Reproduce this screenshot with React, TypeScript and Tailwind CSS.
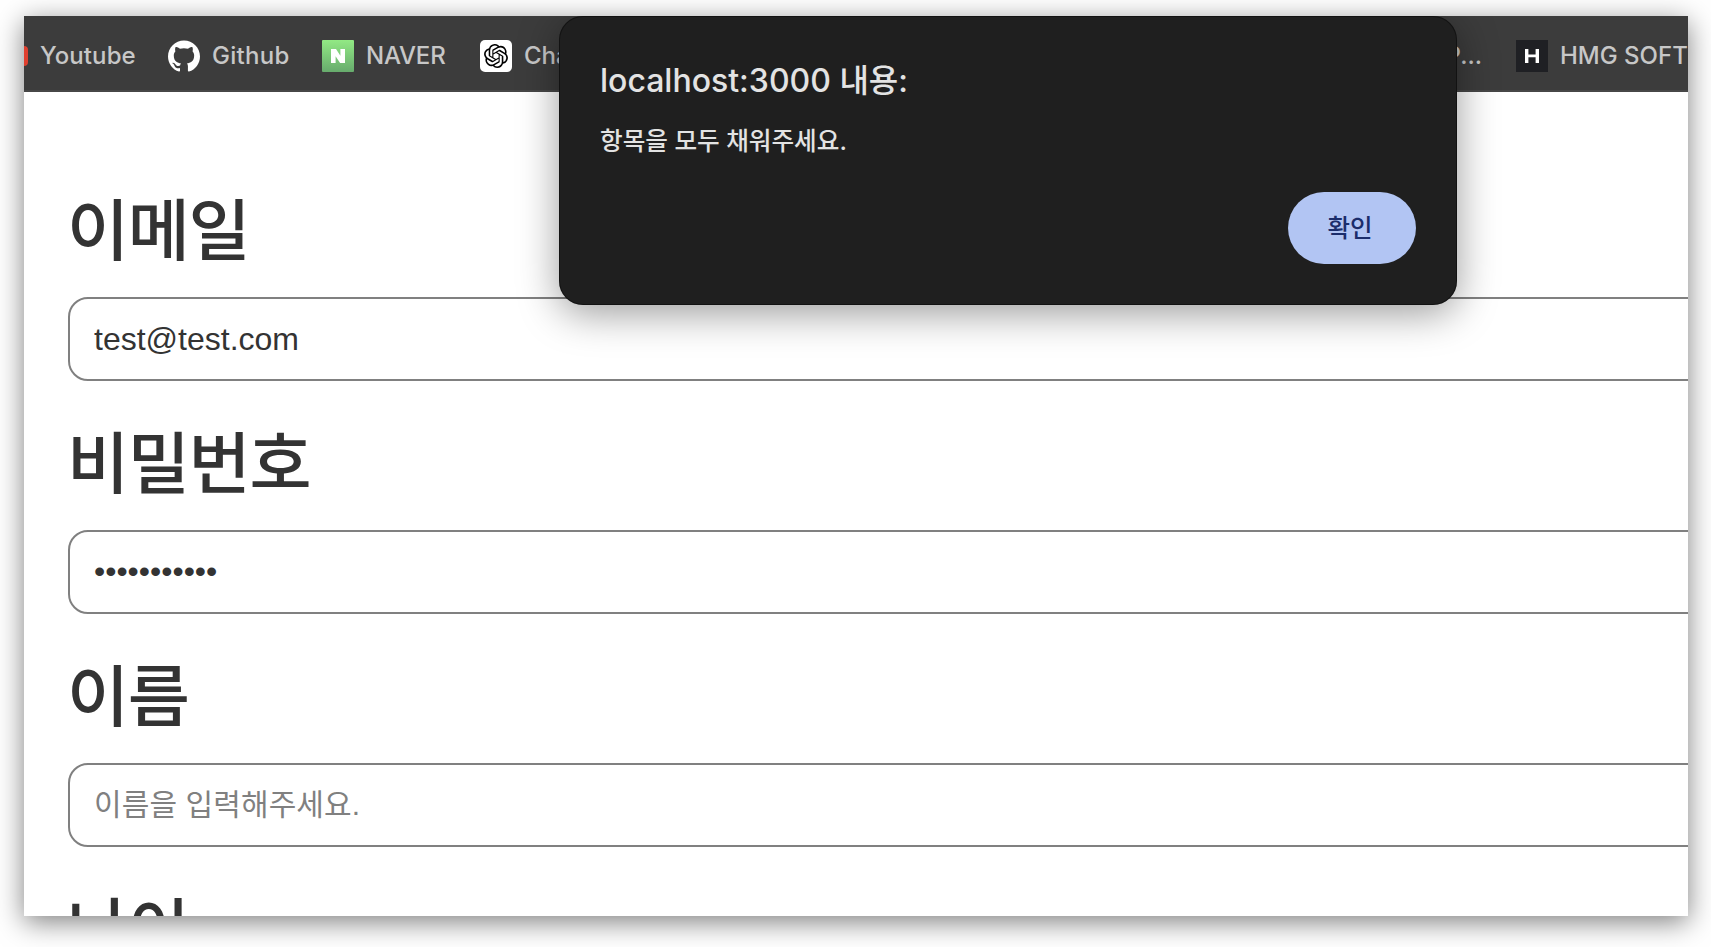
import type { ReactNode } from "react";
import { SiGithub, SiOpenai } from "react-icons/si";

const latin = "font-['Inter','Noto_Sans_CJK_KR',sans-serif]";
const korean = "font-['Noto_Sans_CJK_KR',sans-serif]";

function Bookmark({ icon, label, className, tracking = "tracking-normal" }: { icon: ReactNode; label: string; className?: string; tracking?: string }) {
  return (
    <div className={`flex shrink-0 items-center gap-3 ${className ?? ""}`}>
      {icon}
      <span className={`whitespace-nowrap text-[24px] leading-8 font-medium text-[#c7c7c7] ${tracking}`}>{label}</span>
    </div>
  );
}

function BookmarkBar() {
  return (
    <div className={`flex h-[76px] shrink-0 items-center overflow-hidden border-b-2 border-[#474747] bg-[#3c3c3c] pt-1.5 ${latin}`}>
      <Bookmark
        className="w-[144px]"
        icon={<span className="h-5 w-1 shrink-0 rounded-r-[4px] bg-[#e0402f]" />}
        label="Youtube"
        tracking="tracking-[0.1px]"
      />
      <Bookmark className="w-[154px]" icon={<SiGithub className="size-8 text-white" />} label="Github" tracking="tracking-[0.3px]" />
      <Bookmark
        className="w-[158px]"
        icon={
          <svg viewBox="0 0 32 32" className="size-8">
            <defs>
              <linearGradient id="naver" x1="0" y1="0" x2="0" y2="1">
                <stop offset="0" stopColor="#92e984" />
                <stop offset="1" stopColor="#67ab6d" />
              </linearGradient>
            </defs>
            <rect width="32" height="32" rx="1" fill="url(#naver)" />
            <path d="M9 9h5l4.4 6.7V9H23v14h-4.9L13.6 16.3V23H9z" fill="#fff" />
          </svg>
        }
        label="NAVER"
        tracking="tracking-[-0.2px]"
      />
      <Bookmark
        className="w-[884px]"
        icon={
          <span className="flex size-8 items-center justify-center rounded-[5px] bg-white">
            <SiOpenai className="size-6 text-black" />
          </span>
        }
        label="ChatGPT"
      />
      <div className="flex w-[152px] shrink-0 justify-end pr-[34px]">
        <span className="whitespace-nowrap text-[24px] leading-8 font-medium text-[#c7c7c7]">P...</span>
      </div>
      <Bookmark
        icon={
          <svg viewBox="0 0 32 32" className="size-8">
            <rect width="32" height="32" fill="#1f2024" />
            <path d="M9 9h3.4v5.5h7.2V9H23v14h-3.4v-5.7h-7.2V23H9z" fill="#fff" />
          </svg>
        }
        label="HMG SOFT"
      />
    </div>
  );
}

const inputClass =
  "block h-[84px] w-[1800px] rounded-[20px] border-2 border-[#808080] bg-white px-6 text-[32px] text-[#333] outline-none placeholder-shown:pb-0.5 [&[type=password]]:pb-0.5 placeholder:text-[30px] placeholder:tracking-[0.1px] placeholder:text-[#808080] placeholder:opacity-100 font-['Liberation_Sans','Noto_Sans_CJK_KR',sans-serif]";

function Field({ label, type = "text", value, placeholder }: { label: string; type?: string; value?: string; placeholder?: string }) {
  return (
    <label className="block h-[233px] shrink-0">
      <span className={`-ml-px block h-[113px] pt-0.5 text-[67.5px] leading-[80px] font-medium tracking-[-1.3px] text-[#333] ${korean}`}>{label}</span>
      <input className={inputClass} type={type} defaultValue={value} placeholder={placeholder} />
    </label>
  );
}

function AlertDialog() {
  return (
    <div
      role="alertdialog"
      className={`absolute top-0 left-[535px] flex h-[289px] w-[898px] flex-col rounded-[24px] bg-[#1f1f1f] px-[41px] pt-[44px] shadow-[0_8px_40px_rgba(0,0,0,0.4),inset_0_0_0_1px_rgba(0,0,0,0.4)] ${latin}`}
    >
      <h2 className="h-[60px] pt-px text-[32px] leading-10 font-medium text-[#e3e3e3]">localhost:3000 내용:</h2>
      <p className="h-[72px] pt-px text-[24.6px] leading-10 font-medium text-[#e3e3e3]">항목을 모두 채워주세요.</p>
      <button className="h-[72px] w-32 self-end rounded-full bg-[#b2c5f3] pt-px pr-1 text-[24.5px] font-medium text-[#1b2d6b]">확인</button>
    </div>
  );
}

export default function App() {
  return (
    <div className="h-[947px] w-[1711px] overflow-hidden bg-white px-6 pt-4">
      <div className="relative h-[900px] w-[1664px] shadow-[0_6px_26px_rgba(0,0,0,0.5)]">
        <div className="relative flex size-full flex-col overflow-hidden bg-white">
          <BookmarkBar />
          <main className="pt-[92px] pl-[44px]">
            <Field label="이메일" value="test@test.com" />
            <Field label="비밀번호" type="password" value="password123" />
            <Field label="이름" placeholder="이름을 입력해주세요." />
            <Field label="나이" />
          </main>
          <AlertDialog />
        </div>
      </div>
    </div>
  );
}
